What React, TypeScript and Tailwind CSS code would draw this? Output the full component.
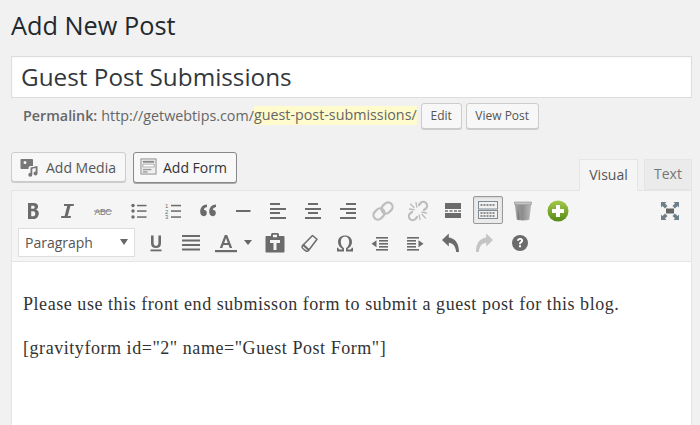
import React from "react";

const G = "#6b6b6b";
const Ico = ({ children, color = G }: { children: React.ReactNode; color?: string }) => (
  <svg width="24" height="24" viewBox="0 0 24 24" fill={color} stroke="none" style={{ color }}>
    {children}
  </svg>
);

const lines = (rows: [number, number, number, number?][]) =>
  rows.map(([x, y, w, h = 2], i) => <rect key={i} x={x} y={y} width={w} height={h} />);

const Bold = () => (
  <Ico>
    <path fillRule="evenodd" d="M7 4h5.700c2.900 0 4.400 1.400 4.400 3.600 0 1.500-.8 2.600-2 3.100 1.700.4 2.700 1.800 2.700 3.500 0 2.800-1.900 5.800-5 5.800H7zM10.200 6.700v3h1.900c1 0 1.600-.6 1.600-1.500 0-1-.6-1.500-1.600-1.500zM10.200 12.300v5h2.300c1.100 0 1.800-1 1.800-2.500s-.7-2.500-1.800-2.500z" />
  </Ico>
);
const Italic = () => (
  <Ico>
    <path d="M8 5h10l-.4 2h-3.200l-2.600 10h3.200l-.4 2H5l.4-2h3.200l2.600-10H8z" />
  </Ico>
);
const Strike = () => (
  <svg width="24" height="24" viewBox="0 0 24 24">
    <text x="12" y="15.500" textAnchor="middle" fontSize="8.500" fontFamily="'Liberation Sans',sans-serif" fill="#777" textLength="17">ABC</text>
    <rect x="3" y="11.600" width="18" height="0.900" fill="#777" />
  </svg>
);
const UL = () => (
  <Ico>
    <circle cx="7" cy="6.500" r="1.700" />
    <circle cx="7" cy="12" r="1.700" />
    <circle cx="7" cy="18" r="1.700" />
    {lines([[11, 5.800, 9.500, 1.500], [11, 11.300, 9.500, 1.500], [11, 17.300, 9.500, 1.500]])}
  </Ico>
);
const OL = () => (
  <svg width="24" height="24" viewBox="0 0 24 24" fill={G}>
    <text x="4" y="9" fontSize="6" fontFamily="'Liberation Sans',sans-serif">1</text>
    <text x="4" y="14.500" fontSize="6" fontFamily="'Liberation Sans',sans-serif">2</text>
    <text x="4" y="20" fontSize="6" fontFamily="'Liberation Sans',sans-serif">3</text>
    {lines([[10, 5.800, 10, 1.500], [10, 11.300, 10, 1.500], [10, 17.300, 10, 1.500]])}
  </svg>
);
const Quote = () => (
  <Ico>
    <path d="M11 5.500v2.600c-2 .4-3.100 1.500-3.200 3h.7c1.400 0 2.300 1.100 2.300 2.800 0 1.900-1.200 3.300-3 3.300-2.200 0-3.600-1.800-3.600-4.400C4.200 8.500 6.700 5.700 11 5.500z" />
    <path d="M20 5.500v2.600c-2 .4-3.100 1.500-3.200 3h.7c1.400 0 2.300 1.100 2.300 2.800 0 1.900-1.200 3.300-3 3.300-2.200 0-3.600-1.800-3.600-4.400 0-4.300 2.500-7.100 6.800-7.300z" />
  </Ico>
);
const HR = () => <Ico>{lines([[5, 11, 14.500]])}</Ico>;
const AL = () => <Ico>{lines([[4, 4, 10], [4, 9, 16], [4, 13, 10], [4, 18, 16]])}</Ico>;
const AC = () => <Ico>{lines([[7, 4, 10], [4, 9, 16], [7, 13, 10], [4, 18, 16]])}</Ico>;
const AR = () => <Ico>{lines([[10, 4, 10], [4, 9, 16], [10, 13, 10], [4, 18, 16]])}</Ico>;
const Link = () => (
  <svg width="24" height="24" viewBox="0 0 24 24" fill="none" stroke="#bdbdbd" strokeWidth="2.200">
    <rect x="11.500" y="3" width="9" height="12" rx="4.500" transform="rotate(45 16 9)" />
    <rect x="3.500" y="9" width="9" height="12" rx="4.500" transform="rotate(45 8 15)" />
  </svg>
);
const Unlink = () => (
  <svg width="24" height="24" viewBox="0 0 24 24" fill="none" stroke="#bdbdbd" strokeWidth="2.200" strokeLinecap="round">
    <path d="M13 6l1.500-2a4 4 0 0 1 5.500 0 4 4 0 0 1 0 5.500L18 11" />
    <path d="M11 18l-1.500 2a4 4 0 0 1-5.500 0 4 4 0 0 1 0-5.500L6 13" />
    <path d="M4.500 5l3.500 3.500M19.500 19L16 15.500M10 3.500l.8 4.500M14 20.500l-.8-4.500M3.500 10l4.500.8M20.500 14l-4.500-.8" strokeWidth="1.400" />
  </svg>
);
const More = () => (
  <Ico>
    <rect x="4" y="4" width="16" height="6" />
    <rect x="4" y="11.300" width="3" height="1.400" />
    <rect x="8.500" y="11.300" width="3" height="1.400" />
    <rect x="13" y="11.300" width="3" height="1.400" />
    <rect x="17" y="11.300" width="3" height="1.400" />
    <rect x="4" y="14" width="16" height="5" />
  </Ico>
);
const Kitchen = () => (
  <svg width="22" height="20" viewBox="0 0 22 20">
    <rect x="1.500" y="1.500" width="19" height="7.500" fill="#f2f2f2" stroke="#7f8a90" />
    <rect x="1.500" y="10.500" width="19" height="8" fill="#f2f2f2" stroke="#7f8a90" />
    <path d="M3.500 5h15M3.500 13h15M3.500 16h15" stroke="#6d6d6d" strokeWidth="1.400" strokeDasharray="2 1" />
  </svg>
);
const Trash = () => (
  <svg width="24" height="24" viewBox="0 0 24 24">
    <defs>
      <linearGradient id="tr" x1="0" y1="0" x2="1" y2="0">
        <stop offset="0" stopColor="#a8a8a8" />
        <stop offset="0.45" stopColor="#8c8c8c" />
        <stop offset="1" stopColor="#bdbdbd" />
      </linearGradient>
    </defs>
    <path d="M3.500 3h17l-2.200 17.500c-1.500 1.200-11.100 1.200-12.600 0z" fill="url(#tr)" />
    <path d="M3.500 3h17l-.4 2.800H3.900z" fill="#c4c4c4" stroke="#8f8f8f" strokeWidth="0.600" />
    <path d="M7 7l1.600 13.500H6.500z" fill="#777" />
  </svg>
);
const Plus = () => (
  <svg width="24" height="24" viewBox="0 0 24 24">
    <defs>
      <linearGradient id="gp" x1="0" y1="0" x2="0" y2="1">
        <stop offset="0" stopColor="#a3c94a" />
        <stop offset="1" stopColor="#568a17" />
      </linearGradient>
    </defs>
    <circle cx="12" cy="12" r="10.500" fill="url(#gp)" />
    <path d="M10 6h4v4h4v4h-4v4h-4v-4H6v-4h4z" fill="#fff" />
  </svg>
);
const Full = () => (
  <svg width="24" height="24" viewBox="0 0 24 24" fill="#6f7f8a">
    <rect x="8" y="9.500" width="8" height="5" fill="#666" />
    <path d="M3 3h5.500L7 4.500 9.500 7 7 9.500 4.500 7 3 8.500z" />
    <path d="M21 3v5.500L19.500 7 17 9.500 14.500 7 17 4.500 15.500 3z" />
    <path d="M3 21v-5.500L4.500 17 7 14.500 9.500 17 7 19.500 8.500 21z" />
    <path d="M21 21h-5.500l1.500-1.500L14.500 17l2.500-2.500 2.500 2.500 1.500-1.500z" />
  </svg>
);
const Under = () => (
  <Ico>
    <path d="M7 4.500h2.600v7.500c0 1.900.9 2.800 2.400 2.800s2.400-.9 2.400-2.800V4.500H17v7.700c0 3.300-2 4.900-5 4.900s-5-1.600-5-4.900z" />
    <rect x="6.500" y="18.500" width="11" height="1.800" />
  </Ico>
);
const Just = () => <Ico>{lines([[3, 4, 18], [3, 8.500, 18], [3, 13, 18], [3, 17.500, 18]])}</Ico>;
const Color = () => (
  <svg width="24" height="24" viewBox="0 0 24 24" fill={G}>
    <path fillRule="evenodd" d="M10.800 4h2.400l5 13h-2.500l-1.100-3H9.400l-1.100 3H5.800zM12 7l-1.800 5h3.600z" />
    <rect x="1" y="19" width="22" height="2.200" />
  </svg>
);
const Paste = () => (
  <Ico>
    <path fillRule="evenodd" d="M3.500 5H8V3.500C8 2.500 9 2 10 2h4c1 0 2 .5 2 1.500V5h4.500c.5 0 1 .5 1 1v14.500c0 .5-.5 1-1 1h-17c-.5 0-1-.5-1-1V6c0-.5.5-1 1-1zM10 3.800v2.400h4V3.800zM7 9v3h3.500v7h3v-7H17V9z" />
  </Ico>
);
const Eraser = () => (
  <svg width="24" height="24" viewBox="0 0 24 24" fill="none" stroke={G} strokeWidth="1.500" strokeLinejoin="round">
    <path d="M14.500 4.500l4.500 3.800-8.500 11.200c-.8 1-1.800 1-2.700.3l-3-2.300c-.9-.8-1.100-1.700-.4-2.700z" />
    <path d="M4.800 13.500l6 5.500" strokeWidth="2.200" />
  </svg>
);
const Omega = () => (
  <svg width="24" height="24" viewBox="0 0 24 24" fill={G}>
    <path d="M4 20.500v-3.800h1.300c.3 1.200.7 1.800 1.700 1.800h2.300v-.7C6.700 16.300 5 14 5 11c0-3.900 2.900-6.500 7-6.500s7 2.600 7 6.500c0 3-1.700 5.300-4.300 6.800v.7H17c1 0 1.400-.6 1.700-1.800H20v3.800h-7v-3.300c2-1.300 3.200-3.600 3.200-6.500 0-3.200-1.700-5.300-4.200-5.300S7.800 7.500 7.800 10.700c0 2.900 1.200 5.200 3.200 6.500v3.300z" />
  </svg>
);
const Outdent = () => (
  <Ico>
    {lines([[8, 6, 12, 1.600], [11, 9, 9, 1.600], [11, 12, 9, 1.600], [11, 15, 9, 1.600], [8, 18, 12, 1.600]])}
    <path d="M3.500 12.800l5-3.500v7z" />
  </Ico>
);
const Indent = () => (
  <Ico>
    {lines([[4, 6, 12, 1.600], [4, 9, 9, 1.600], [4, 12, 9, 1.600], [4, 15, 9, 1.600], [4, 18, 12, 1.600]])}
    <path d="M20.500 12.800l-5-3.500v7z" />
  </Ico>
);
const Undo = () => (
  <svg width="24" height="24" viewBox="0 0 24 24" fill="none">
    <path d="M4 9l6.800-6.500V6.600C12 7 21 7.500 21 21h-2.800c-.6-6.500-3.800-9-7.400-9.300v3.800z" fill={G} />
  </svg>
);
const Redo = () => (
  <svg width="24" height="24" viewBox="0 0 24 24" fill="none">
    <path d="M20 9l-6.800-6.500V6.600C12 7 3 7.500 3 21h2.800c.6-6.500 3.800-9 7.400-9.300v3.800z" fill="#c4c4c4" />
  </svg>
);
const Help = () => (
  <svg width="24" height="24" viewBox="0 0 24 24">
    <circle cx="12" cy="12" r="8" fill={G} />
    <path d="M9 9.800C9.100 8 10.300 7 12.100 7c1.900 0 3 1.100 3 2.600 0 1.100-.6 1.800-1.400 2.300-.7.500-.8.700-.8 1.400h-1.900c0-1.200.4-1.900 1.200-2.500.7-.5.900-.7.900-1.200s-.4-.8-1-.8-1.100.4-1.200 1z M11 14.300h2v2h-2z" fill="#fff" />
  </svg>
);

const Btn = ({ children }: { children: React.ReactNode }) => (
  <div className="w-[35px] h-[28px] pt-[2px] flex items-center justify-center shrink-0">{children}</div>
);

const row1 = [Bold, Italic, Strike, UL, OL, Quote, HR, AL, AC, AR, Link, Unlink, More];
const row2 = [Under, Just];
const row2b = [Paste, Eraser, Omega, Outdent, Indent, Undo, Redo, Help];

export default function App() {
  return (
    <div
      className="w-[700px] h-[425px] overflow-hidden bg-[#f1f1f1] pl-[11px] pr-[8px] text-[#444]"
      style={{ fontFamily: "'Open Sans', sans-serif" }}
    >
      <h1 className="text-[25.300px] leading-[29px] text-[#23282d] pt-[11px] h-[56px]">Add New Post</h1>

      <div className="h-[42px] bg-white border border-[#dddddd] px-[9px] flex items-center text-[24.300px] leading-none text-[#32373c] pt-[1px] shadow-[inset_0_1px_2px_rgba(0,0,0,0.04)]">
        Guest Post Submissions
      </div>

      <div className="h-[26px] mt-[5px] pl-[12px] flex items-center text-[14.300px] text-[#666]">
        <b className="font-semibold -mt-[1px]">Permalink:</b>
        <span className="ml-[4px] -mt-[1px]">http://getwebtips.com/</span>
        <span className="bg-[#fffbcc] h-[19px] leading-[18px] -mt-[1px]">guest-post-submissions/</span>
        <span className="ml-[4px] h-[26px] w-[41px] flex items-center justify-center text-[12px] border border-[#cccccc] rounded-[3px] bg-[#f7f7f7] text-[#555] shadow-[0_1px_0_#cccccc]">
          Edit
        </span>
        <span className="ml-[4px] h-[26px] w-[73px] flex items-center justify-center text-[12px] border border-[#cccccc] rounded-[3px] bg-[#f7f7f7] text-[#555] shadow-[0_1px_0_#cccccc]">
          View Post
        </span>
      </div>

      <div className="h-[61px] flex justify-between pt-[23px]">
        <div className="flex gap-[7px]">
          <div className="w-[115px] h-[30px] flex items-center pl-[8px] gap-[6px] text-[14px] border border-[#cccccc] rounded-[3px] bg-[#f7f7f7] text-[#555] shadow-[0_1px_0_#cccccc]">
            <svg width="20" height="20" viewBox="0 0 20 20" fill="#777">
              <path fillRule="evenodd" d="M1 2h11c.5 0 1 .5 1 1v6h-2.500c-1 0-2 .8-2 2v1H1.500C1 12 .5 11.500.5 11V3c0-.5.5-1 .5-1zM5 4a1.500 1.500 0 1 0 0 3 1.500 1.500 0 0 0 0-3z" />
              <path d="M10.500 10.500l7-1.500v7.500a2 2 0 1 1-1.800-2V11l-3.400.8v6a2 2 0 1 1-1.800-2z" />
            </svg>
            Add Media
          </div>
          <div className="w-[104px] h-[31px] flex items-center pl-[6px] gap-[6px] text-[14px] border border-[#888888] rounded-[3px] bg-[#f8f8f8] text-[#333] shadow-[0_1px_0_#aaaaaa]">
            <svg width="17" height="17" viewBox="0 0 18 18" className="-mt-[2px]">
              <rect x="1" y="1" width="16" height="16" fill="#f0f0f0" stroke="#8a8a8a" />
              <rect x="3" y="3" width="12" height="2" fill="#8a8a8a" />
              <rect x="3" y="6.500" width="12" height="3" fill="#fff" stroke="#9a9a9a" strokeWidth="0.800" />
              <rect x="3" y="11.500" width="9" height="1.500" fill="#9a9a9a" />
              <rect x="3" y="14" width="5" height="1.500" fill="#9a9a9a" />
            </svg>
            Add Form
          </div>
        </div>
        <div className="flex items-end pt-[7px] gap-[6px] text-[14px]">
          <div className="w-[59px] h-[32px] pb-[2px] -mb-px relative z-10 flex items-center justify-center bg-[#f5f5f5] border border-[#e5e5e5] border-b-[#f5f5f5] text-[#555]">
            Visual
          </div>
          <div className="w-[48px] h-[31px] pb-[2px] flex items-center justify-center bg-[#ebebeb] border border-[#e5e5e5] text-[#777]">
            Text
          </div>
        </div>
      </div>

      <div className="border border-[#e5e5e5] bg-white h-[300px]">
        <div className="bg-[#f5f5f5] border-b border-[#e5e5e5] h-[71px] pl-[3px] pt-[5px]">
          <div className="flex h-[28px] items-center">
            {row1.map((C, i) => (
              <Btn key={i}>
                <C />
              </Btn>
            ))}
            <div className="w-[30px] h-[28px] ml-[2.500px] mr-[2.500px] shrink-0 flex items-center justify-center border border-[#999] rounded-[2px] bg-[#ebebeb] shadow-[inset_0_1px_2px_rgba(0,0,0,0.1)]">
              <Kitchen />
            </div>
            <Btn>
              <Trash />
            </Btn>
            <Btn>
              <Plus />
            </Btn>
            <div className="ml-auto mr-[4px]">
              <Btn>
                <Full />
              </Btn>
            </div>
          </div>
          <div className="flex h-[30px] items-center mt-[3px]">
            <div className="ml-[3px] w-[117px] h-[29px] bg-white border border-[#dddddd] flex items-center justify-between pl-[6px] pr-[6px] text-[14px] text-[#555] mr-[3px]">
              Paragraph
              <span className="w-0 h-0 border-x-[4px] border-x-transparent border-t-[6px] border-t-[#666]" />
            </div>
            {row2.map((C, i) => (
              <Btn key={i}>
                <C />
              </Btn>
            ))}
            <Btn>
              <Color />
            </Btn>
            <div className="w-[15px] flex justify-center shrink-0 -ml-[3px] mr-[2px]">
              <span className="w-0 h-0 border-x-[4px] border-x-transparent border-t-[5px] border-t-[#666]" />
            </div>
            {row2b.map((C, i) => (
              <Btn key={i}>
                <C />
              </Btn>
            ))}
          </div>
        </div>
        <div
          className="pl-[11px] pt-[31px] text-[#333] text-[18px] tracking-[0.550px] leading-[23px]"
          style={{ fontFamily: "'Liberation Serif', serif" }}
        >
          <p>Please use this front end submisson form to submit a guest post for this blog.</p>
          <p className="mt-[21px]">[gravityform id="2" name="Guest Post Form"]</p>
        </div>
      </div>
    </div>
  );
}
